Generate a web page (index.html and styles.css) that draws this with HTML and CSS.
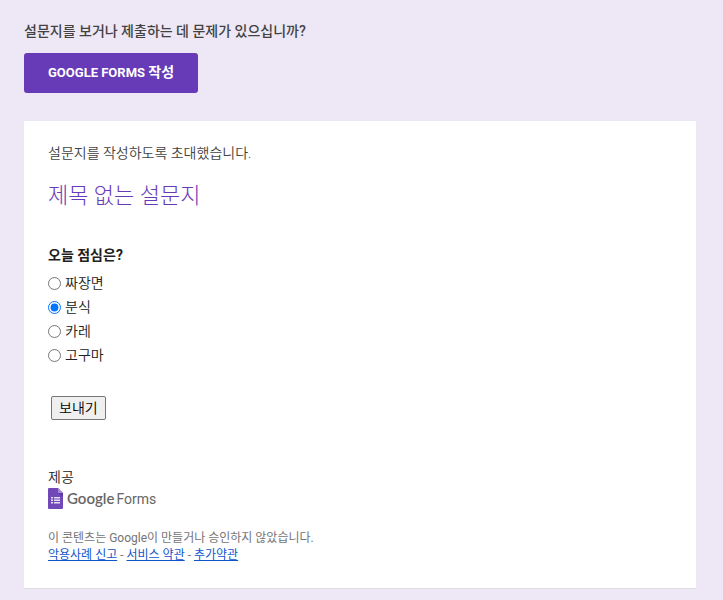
FILE: index.html
```html
<!DOCTYPE html>
<html lang="ko">
<head>
<meta charset="utf-8">
<meta name="viewport" content="width=device-width, initial-scale=1">
<title>제목 없는 설문지</title>
<link rel="stylesheet" href="styles.css">
</head>
<body>
<main class="page">
  <header class="intro">
    <p class="intro-text">설문지를 보거나 제출하는 데 문제가 있으십니까?</p>
    <a class="fill-link" href="#form">GOOGLE FORMS <span class="fill-action">작성</span></a>
  </header>
  <section class="card">
    <p class="invite">설문지를 작성하도록 초대했습니다.</p>
    <h1 class="title">제목 없는 설문지</h1>
    <form id="form">
      <fieldset class="question">
        <legend class="question-title">오늘 점심은?</legend>
        <label class="option"><input type="radio" name="lunch">짜장면</label>
        <label class="option"><input type="radio" name="lunch" checked>분식</label>
        <label class="option"><input type="radio" name="lunch">카레</label>
        <label class="option"><input type="radio" name="lunch">고구마</label>
      </fieldset>
      <button class="submit" type="button">보내기</button>
    </form>
    <footer class="footer">
      <p class="powered">제공</p>
      <div class="logo">
        <svg class="logo-icon" viewBox="0 0 15 21" aria-hidden="true">
          <path fill="#7248b9" d="M1 0H10l5 5v15a1 1 0 0 1-1 1H1a1 1 0 0 1-1-1V1a1 1 0 0 1 1-1z"/>
          <path fill="#5c35a5" d="M10.500 5H15v4z"/>
          <path fill="#a58bd3" d="M10 0l5 5h-4a1 1 0 0 1-1-1z"/>
          <path fill="#e6dff3" d="M3 9h2v1.500H3zM6 9h6v1.500H6zM3 11.500h2V13H3zM6 11.500h6V13H6zM3 14h2v1.500H3zM6 14h6v1.500H6z"/>
        </svg>
        <span class="logo-text"><span class="logo-brand">Google</span><span class="logo-product">Forms</span></span>
      </div>
      <p class="legal">이 콘텐츠는 Google이 만들거나 승인하지 않았습니다.<br><a href="#">악용사례 신고</a> - <a href="#">서비스 약관</a> - <a href="#">추가약관</a></p>
    </footer>
  </section>
</main>
</body>
</html>
```
FILE: styles.css
```css
* {
  box-sizing: border-box;
}

body {
  margin: 0;
  background: #ede7f6;
  color: #212121;
  font: 350 14px/20px Roboto, "Noto Sans CJK KR", sans-serif;
}

p,
h1 {
  margin: 0;
}

.page {
  max-width: 720px;
  padding: 21px 24px 12px;
}

.intro-text {
  color: #424242;
  font-weight: 500;
}

.fill-link {
  display: inline-block;
  margin-top: 12px;
  padding: 0 24px;
  border-radius: 3px;
  background: #673ab7;
  color: #fff;
  font-size: 13px;
  font-weight: 700;
  line-height: 40px;
  text-decoration: none;
  vertical-align: top;
}

.fill-action {
  font-size: 14px;
  line-height: 20px;
}

.card {
  margin-top: 28px;
  padding: 22px 24px 24px;
  border-bottom: 1px solid #dcdce0;
  background: #fff;
}

.invite {
  color: #424242;
}

.title {
  margin-top: 17px;
  color: #673ab7;
  font-size: 22px;
  font-weight: 300;
  line-height: 32px;
}

.question {
  margin: 33px 0 0;
  padding: 0;
  border: 0;
}

.question-title {
  padding: 0;
  font-weight: 700;
  margin-bottom: 6px;
}

.option {
  display: flex;
  align-items: center;
  gap: 4px;
  width: fit-content;
  height: 24px;
}

.option input {
  width: 13px;
  height: 13px;
  margin: 0;
}

.submit {
  display: block;
  height: 24px;
  margin: 29px 0 0 3px;
  padding: 0 7px;
  border: 1px solid #767676;
  border-radius: 2px;
  background: #efefef;
  color: #000;
  font: inherit;
}

.footer {
  margin-top: 47px;
}

.logo {
  display: flex;
  align-items: center;
  gap: 4px;
  height: 22px;
}

.logo-icon {
  width: 15px;
  height: 21px;
}

.logo-text {
  display: flex;
  align-items: baseline;
  gap: 2px;
  color: #666;
}

.logo-brand {
  font-family: Lato, sans-serif;
  font-size: 15px;
  font-weight: 600;
}

.logo-product {
  font-family: Roboto, sans-serif;
  font-size: 14px;
  font-weight: 400;
}

.legal {
  margin-top: 21px;
  color: #757575;
  font-size: 12px;
  font-weight: 400;
  line-height: 17px;
}

.legal a {
  color: #15c;
}
```
